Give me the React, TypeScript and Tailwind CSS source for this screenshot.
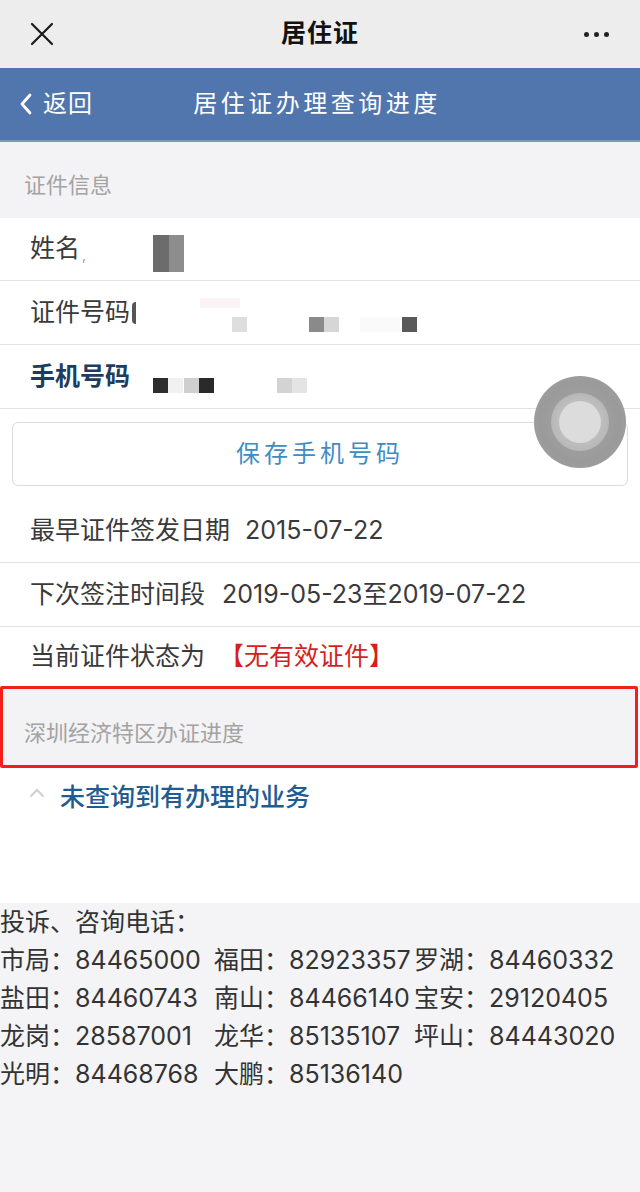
import React from 'react';

const font = { fontFamily: 'Inter, "Noto Sans CJK SC", sans-serif' };

const phones: [string, string][] = [
  ['市局', '84465000'],
  ['福田', '82923357'],
  ['罗湖', '84460332'],
  ['盐田', '84460743'],
  ['南山', '84466140'],
  ['宝安', '29120405'],
  ['龙岗', '28587001'],
  ['龙华', '85135107'],
  ['坪山', '84443020'],
  ['光明', '84468768'],
  ['大鹏', '85136140'],
];

const Px: React.FC<{ x: number; y: number; w?: number; h?: number; c: string }> = ({ x, y, w = 15, h = 15, c }) => (
  <div className="absolute" style={{ left: x, top: y, width: w, height: h, background: c }} />
);

const App: React.FC = () => {
  return (
    <div className="relative w-[640px] h-[1192px] bg-white flex flex-col overflow-hidden text-[#333]" style={font}>
      {/* WeChat top bar */}
      <div className="h-[68px] shrink-0 bg-[#ededed] grid grid-cols-[1fr_auto_1fr] items-center px-[28px]">
        <svg width="26" height="26" viewBox="0 0 26 26" className="ml-[1px]">
          <path d="M3 3 L23 23 M23 3 L3 23" stroke="#1a1a1a" strokeWidth="2.2" strokeLinecap="round" />
        </svg>
        <div className="text-[25px] font-semibold text-[#111] tracking-[1px]">居住证</div>
        <div className="flex justify-end gap-[5px] pr-[3px]">
          <span className="w-[5px] h-[5px] rounded-full bg-[#222]" />
          <span className="w-[5px] h-[5px] rounded-full bg-[#222]" />
          <span className="w-[5px] h-[5px] rounded-full bg-[#222]" />
        </div>
      </div>

      {/* Blue header */}
      <div className="h-[74px] shrink-0 bg-[#5076ad] border-b-2 border-[#7b98c2] grid grid-cols-[1fr_auto_1fr] items-center text-white">
        <div className="flex items-center pl-[19px] gap-[10px]">
          <svg width="14" height="24" viewBox="0 0 14 24">
            <path d="M11 3 L3 12 L11 21" stroke="#fff" strokeWidth="2.8" fill="none" strokeLinecap="round" strokeLinejoin="round" />
          </svg>
          <span className="text-[24px] tracking-[1px]">返回</span>
        </div>
        <div className="text-[24px] tracking-[3.5px] pr-[6px]">居住证办理查询进度</div>
        <div />
      </div>

      {/* section title */}
      <div className="h-[76px] shrink-0 bg-[#f3f3f5] flex items-center pl-[24px] pt-[10px] text-[22px] text-[#a3a3a3]">
        证件信息
      </div>

      <div className="relative h-[63px] shrink-0 flex items-center pl-[30px] border-b border-[#e3e3e3] text-[25px] text-[#3a3a3a]">
        姓名<span className="text-[#999] ml-[2px] text-[14px] mt-[10px]">,</span>
        <Px x={153} y={17} w={16} h={37} c="#6c6c6c" />
        <Px x={169} y={17} w={15} h={37} c="#8d8d8d" />
      </div>
      <div className="relative h-[64px] shrink-0 flex items-center pl-[30px] border-b border-[#e3e3e3] text-[25px] text-[#3a3a3a]">
        证件号码<span className="w-[4px] h-[22px] bg-[#555] rounded-l-full ml-[2px]" />
        <Px x={200} y={17} w={40} h={10} c="#fbf3f5" />
        <Px x={232} y={36} c="#dedede" />
        <Px x={309} y={36} c="#8a8a8a" />
        <Px x={324} y={36} c="#d6d6d6" />
        <Px x={360} y={36} w={40} c="#fbfafb" />
        <Px x={402} y={36} c="#5a5a5a" />
      </div>
      <div className="relative h-[64px] shrink-0 flex items-center pl-[30px] border-b border-[#e3e3e3] text-[25px] font-semibold text-[#1c3d60]">
        手机号码
        <Px x={153} y={33} c="#2e2e2e" />
        <Px x={168} y={33} c="#f1f1f1" />
        <Px x={184} y={33} c="#cfcfcf" />
        <Px x={199} y={33} c="#2a2a2a" />
        <Px x={277} y={33} c="#d3d3d3" />
        <Px x={292} y={33} c="#e4e4e4" />
      </div>

      <div className="shrink-0 px-[12px] pt-[13px] pb-[14px]">
        <div className="h-[64px] border border-[#dcdcdc] rounded-[6px] flex items-center justify-center text-[24px] tracking-[4px] text-[#3d8cc5]">
          保存手机号码
        </div>
      </div>

      <div className="h-[63px] shrink-0 flex items-center pl-[30px] border-b border-[#e3e3e3] text-[25px] text-[#3a3a3a]">
        最早证件签发日期<span className="ml-[15px]">2015-07-22</span>
      </div>
      <div className="h-[64px] shrink-0 flex items-center pl-[30px] border-b border-[#e3e3e3] text-[25px] text-[#3a3a3a]">
        下次签注时间段<span className="ml-[17px]">2019-05-23至2019-07-22</span>
      </div>
      <div className="h-[59px] shrink-0 flex items-center pl-[30px] text-[25px] text-[#3a3a3a]">
        当前证件状态为<span className="ml-[14px] text-[#d51f1f]">【无有效证件】</span>
      </div>

      {/* highlighted section */}
      <div className="h-[82px] shrink-0 mr-[2px] bg-[#f3f2f5] border-[3px] border-[#f2201b] rounded-[2px] flex items-center pl-[21px] pt-[12px] text-[22px] text-[#a3a3a3]">
        深圳经济特区办证进度
      </div>

      <div className="h-[60px] shrink-0 flex items-center pl-[28px] gap-[14px]">
        <svg width="18" height="12" viewBox="0 0 18 12" className="mb-[10px]">
          <path d="M3 9 L9 3 L15 9" stroke="#cfcfcf" strokeWidth="2" fill="none" strokeLinecap="round" />
        </svg>
        <span className="text-[25px] font-medium text-[#1f5c91]">未查询到有办理的业务</span>
      </div>

      <div className="h-[75px] shrink-0" />

      {/* footer */}
      <div className="flex-1 bg-[#f4f4f6] text-[25px] leading-[38px] text-[#333]">
        <div>投诉、咨询电话：</div>
        <div className="grid grid-cols-[214px_200px_1fr]">
          {phones.map(([k, v]) => (
            <div key={k} className="whitespace-nowrap">
              {k}：{v}
            </div>
          ))}
        </div>
      </div>

      {/* floating assistive touch */}
      <div
        className="absolute left-[534px] top-[376px] w-[92px] h-[92px] rounded-full flex items-center justify-center"
        style={{ background: 'radial-gradient(circle, #a8a8a8 0%, #9a9a9a 60%, #a2a2a2 100%)' }}
      >
        <div
          className="w-[58px] h-[58px] rounded-full flex items-center justify-center"
          style={{ background: 'radial-gradient(circle, #bdbdbd 55%, #acacac 100%)' }}
        >
          <div className="w-[42px] h-[42px] rounded-full bg-[#dcdcdc]" />
        </div>
      </div>
    </div>
  );
};

export default App;
